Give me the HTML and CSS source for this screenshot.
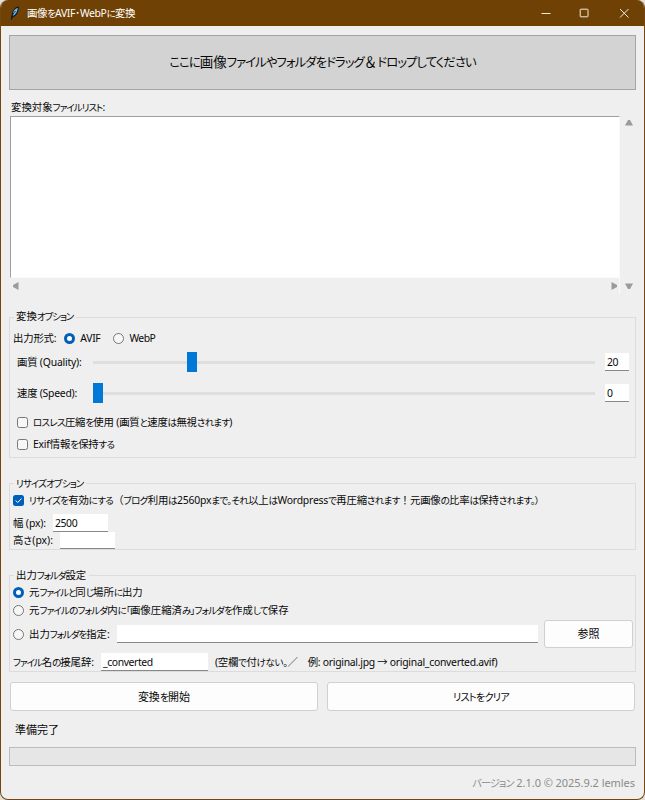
FILE: index.html
```html
<!DOCTYPE html>
<html lang="ja">
<head>
<meta charset="utf-8">
<title>画像をAVIF･WebPに変換</title>
<link rel="stylesheet" href="styles.css">
</head>
<body>
<div class="window">
  <header class="titlebar">
    <svg class="feather" width="10" height="14" viewBox="0 0 10 14"><path d="M1.8 12 2.300 8.500C2.500 5 5 1.800 8.300 1 8.500 5 6.500 9.500 3 10.500Z" fill="#6bb6f2" stroke="#0c1620" stroke-width="1.100"/><path d="M1.400 13.500C2 9.500 4 6.500 5.500 5" fill="none" stroke="#0c1620" stroke-width=".8"/></svg>
    <span class="t title">画像<i>を</i>AVIF･WebP<i>に</i>変換</span>
    <svg class="controls" width="90" height="12" viewBox="0 0 90 12" fill="none" stroke="#f3e9df"><path d="M1.500 6.500h9"/><rect x="40.200" y="2.200" width="7.800" height="7.600" rx=".5"/><path d="m80 2 8.500 8.500m0-8.500-8.500 8.500"/></svg>
  </header>
  <main>
    <div class="drop"><span class="t dropt"><i>ここに</i>画像<i>ファイルやフォルダをドラッグ</i>＆<i>ドロップしてください</i></span></div>
    <div class="caption"><span class="t c1">変換対象<i>ファイルリスト</i>:</span></div>
    <div class="filearea">
      <div class="list"></div>
      <div class="vbar"><svg width="8" height="6"><path d="M3 0H5L8 5.500H0Z"/></svg><svg width="8" height="6"><path d="M0 .5H8L5 6H3Z"/></svg></div>
      <div class="hbar"><svg width="6" height="8"><path d="M5.500 0V8L0 5V3Z"/></svg><svg width="6" height="8"><path d="M.5 0V8L6 5V3Z"/></svg></div>
    </div>

    <section class="group convert">
      <div class="legend"><span class="t l1">変換<i>オプション</i></span></div>
      <div class="row format"><span class="t f1">出力形式:</span><b class="radio on"></b><span class="t avif">AVIF</span><b class="radio"></b><span class="t webp">WebP</span></div>
      <div class="row slider quality"><span class="name"><span class="t q1">画質 (Quality):</span></span><div class="track"><b class="thumb"></b></div><div class="field num">20</div></div>
      <div class="row slider speed"><span class="name"><span class="t s1">速度 (Speed):</span></span><div class="track"><b class="thumb"></b></div><div class="field num">0</div></div>
      <div class="row check lossless"><b class="box"></b><span class="t k1"><i>ロスレス</i>圧縮<i>を</i>使用 (画質<i>と</i>速度<i>は</i>無視<i>されます</i>)</span></div>
      <div class="row check exif"><b class="box"></b><span class="t k2">Exif情報<i>を</i>保持<i>する</i></span></div>
    </section>

    <section class="group resize">
      <div class="legend"><span class="t l2"><i>リサイズオプション</i></span></div>
      <div class="row check enable"><b class="box on"><svg width="11" height="11" viewBox="0 0 11 11"><path d="m2.700 5.500 2 2 3.800-4" fill="none" stroke="#fff"/></svg></b><span class="t k3"><i>リサイズを</i>有効<i>にする</i>（<i>ブログ</i>利用<i>は</i>2560px<i>まで。それ</i>以上<i>は</i>Wordpress<i>で</i>再圧縮<i>されます</i>！元画像<i>の</i>比率<i>は</i>保持<i>されます。）</i></span></div>
      <div class="row width"><span class="t w1">幅 (px):</span><div class="field dim">2500</div></div>
      <div class="row height"><span class="t h1">高<i>さ</i>(px):</span><div class="field dim"></div></div>
    </section>

    <section class="group output">
      <div class="legend"><span class="t l3">出力<i>フォルダ</i>設定</span></div>
      <div class="row pick same"><b class="radio on"></b><span class="t r1">元<i>ファイルと</i>同<i>じ</i>場所<i>に</i>出力</span></div>
      <div class="row pick sub"><b class="radio"></b><span class="t r2">元<i>ファイルのフォルダ</i>内<i>に「</i>画像圧縮済<i>み」フォルダを</i>作成<i>して</i>保存</span></div>
      <div class="row pick folder"><b class="radio"></b><span class="t r3">出力<i>フォルダを</i>指定:</span><div class="field path"></div><div class="button browse">参照</div></div>
      <div class="row suffix"><span class="t x1"><i>ファイル</i>名<i>の</i>接尾辞:</span><div class="field suf">_converted</div><span class="t x2">(空欄<i>で</i>付<i>けない。</i>／　例: original.jpg → original_converted.avif)</span></div>
    </section>

    <div class="actions"><div class="button"><span class="t b1">変換<i>を</i>開始</span></div><div class="button"><span class="t b2"><i>リストをクリア</i></span></div></div>
    <div class="status">準備完了</div>
    <div class="progress"></div>
    <footer><span class="t v"><i>バージョン</i> 2.1.0 © 2025.9.2 lemles</span></footer>
  </main>
</div>
</body>
</html>
```

FILE: styles.css
```css
* { box-sizing: border-box; }
body {
  margin: 0;
  background: #e4dfda;
  color: #080808;
  font: 10.4px/14px "Noto Sans", "Noto Sans CJK JP", sans-serif;
}
i { font-style: normal; font-size: .92em; font-feature-settings: "palt"; letter-spacing: -1.1px; }
b { display: block; flex: none; }
svg { display: block; flex: none; }
.t { white-space: pre; flex: none; }

/* Tracking per label: kanji and Latin on the label, kana on the inner run */
.title { letter-spacing: -.35px; }
.title i { letter-spacing: -.8px; }
.dropt i { letter-spacing: -.97px; }
.c1 i { letter-spacing: -1px; }
.f1 { letter-spacing: -.2px; }
.avif { letter-spacing: -.34px; }
.webp { letter-spacing: -.5px; }
.q1 { letter-spacing: -.21px; }
.s1 { letter-spacing: -.25px; }
.k1, .k2, .k3 { letter-spacing: -.2px; }
.k1 i { letter-spacing: -.75px; }
.k2 i { letter-spacing: -.8px; }
.k3 i { letter-spacing: -.66px; }
.l2 i { letter-spacing: -.93px; }
.w1 { letter-spacing: -.11px; }
.h1 i { letter-spacing: .4px; }
.r2 i { letter-spacing: -.83px; }
.x2 { letter-spacing: -.28px; }
.x2 i { letter-spacing: -.4px; }
.b2 i { letter-spacing: -.75px; }
.v { letter-spacing: -.05px; }
.v i { letter-spacing: -.9px; }

.window {
  height: 800px;
  border: 1px solid #75460f;
  border-top: 0;
  border-radius: 8px;
  background: #efefef;
  overflow: hidden;
}
.titlebar {
  height: 26px;
  display: flex;
  align-items: center;
  padding: 0 14px 0 9px;
  background: #704104;
  color: #fff;
}
.title { margin-left: 7px; }
.controls { margin-left: auto; }
main { padding: 9px 8px 0; }
.drop {
  height: 55px;
  display: flex;
  align-items: center;
  justify-content: center;
  border: 1px solid #a4a4a4;
  background: #d3d3d3;
  font-size: 13.5px;
}
.caption { height: 18px; margin: 8px 0 0 2px; line-height: 18px; }
.filearea {
  display: grid;
  grid-template: 162px 16px / 610px 1fr;
  margin-left: 1px;
}
.list { border: 1px solid #fafafa; border-top-color: #a0a0a0; border-left-color: #a0a0a0; background: #fff; }
.filearea path { fill: #9b9b9b; }
.vbar {
  grid-row: 1 / 3;
  grid-column: 2;
  display: flex;
  flex-direction: column;
  justify-content: space-between;
  padding: 4px 0 5px 5px;
}
.hbar { display: flex; justify-content: space-between; align-items: center; padding: 0 2px 0 3px; border-right: 1px solid #fafafa; }
.group { border: 1px solid #dcdcdc; }
.legend { width: max-content; height: 14px; margin: -8px 0 0 4px; padding: 0 3px 0 2px; background: #efefef; }
.row { display: flex; align-items: center; }
.convert { height: 141px; margin-top: 23px; }
.convert .legend { margin-top: -9px; }
.resize { height: 67px; margin-top: 25px; }
.output { height: 97px; margin-top: 25px; }
.format { height: 20px; margin: 5px 0 0 3px; }
.radio { width: 11px; height: 11px; border: 1px solid #777; border-radius: 50%; background: #f7f7f7; }
.radio.on { border: 3.5px solid #005fb8; background: #fff; }
.format .radio { margin: 0 5px 0 8px; }
.format .avif + .radio { margin-left: 13px; }
.slider { height: 24px; padding-left: 7px; }
.name { width: 76px; }
.quality { margin-top: 2px; }
.speed { margin-top: 7px; }
.track { width: 502px; height: 3px; background: #dedede; display: flex; align-items: center; }
.thumb { width: 10px; height: 20px; background: #0078d7; }
.quality .thumb { margin-left: 94px; }
.field { flex: none; height: 18px; padding-left: 2px; background: #fff; border-bottom: 1px solid #888; line-height: 18px; letter-spacing: -.4px; }
.num { width: 24px; margin-left: 10px; }
.check { height: 16px; }
.box { width: 11px; height: 11px; margin-right: 5px; border: 1px solid #777; border-radius: 2.5px; background: #f7f7f7; }
.box.on { border: 0; background: #005fb8; }
.lossless { margin: 9px 0 0 7px; }
.exif { margin: 6px 0 0 7px; }
.enable { margin: 2px 0 0 3px; }
.width { height: 18px; margin: 6px 0 0 3px; }
.height { height: 17px; margin-left: 3px; }
.height .field { height: 17px; }
.dim { width: 55px; margin-left: 7px; }
.pick { height: 16px; padding-left: 3px; }
.pick .radio { margin-right: 5px; }
.same, .sub, .folder { margin-top: 2px; }
.folder { height: 28px; }
.folder .r3 { width: 81px; }
.path { width: 421px; margin-left: 7px; }
.button {
  display: flex;
  align-items: center;
  justify-content: center;
  border: 1px solid #d0d0d0;
  border-radius: 3px;
  background: #fdfdfd;
  font-size: 11px;
}
.browse { flex: none; width: 89px; height: 28px; margin-left: 6px; }
.suffix { height: 18px; margin: 5px 0 0 3px; }
.suffix .x1 { width: 82px; }
.suf { width: 107px; margin: 0 7px 0 6px; }
.actions { height: 29px; display: grid; grid-template-columns: 1fr 1fr; gap: 9px; margin: 10px 1px 0; }
.status { height: 36px; padding-left: 6px; font-size: 11px; line-height: 37px; }
.progress { height: 19px; border: 1px solid #bcbcbc; background: #e6e6e6; }
footer { height: 34px; display: flex; justify-content: flex-end; align-items: center; padding-right: 1px; color: #8b8b8b; font-size: 11px; }
```
